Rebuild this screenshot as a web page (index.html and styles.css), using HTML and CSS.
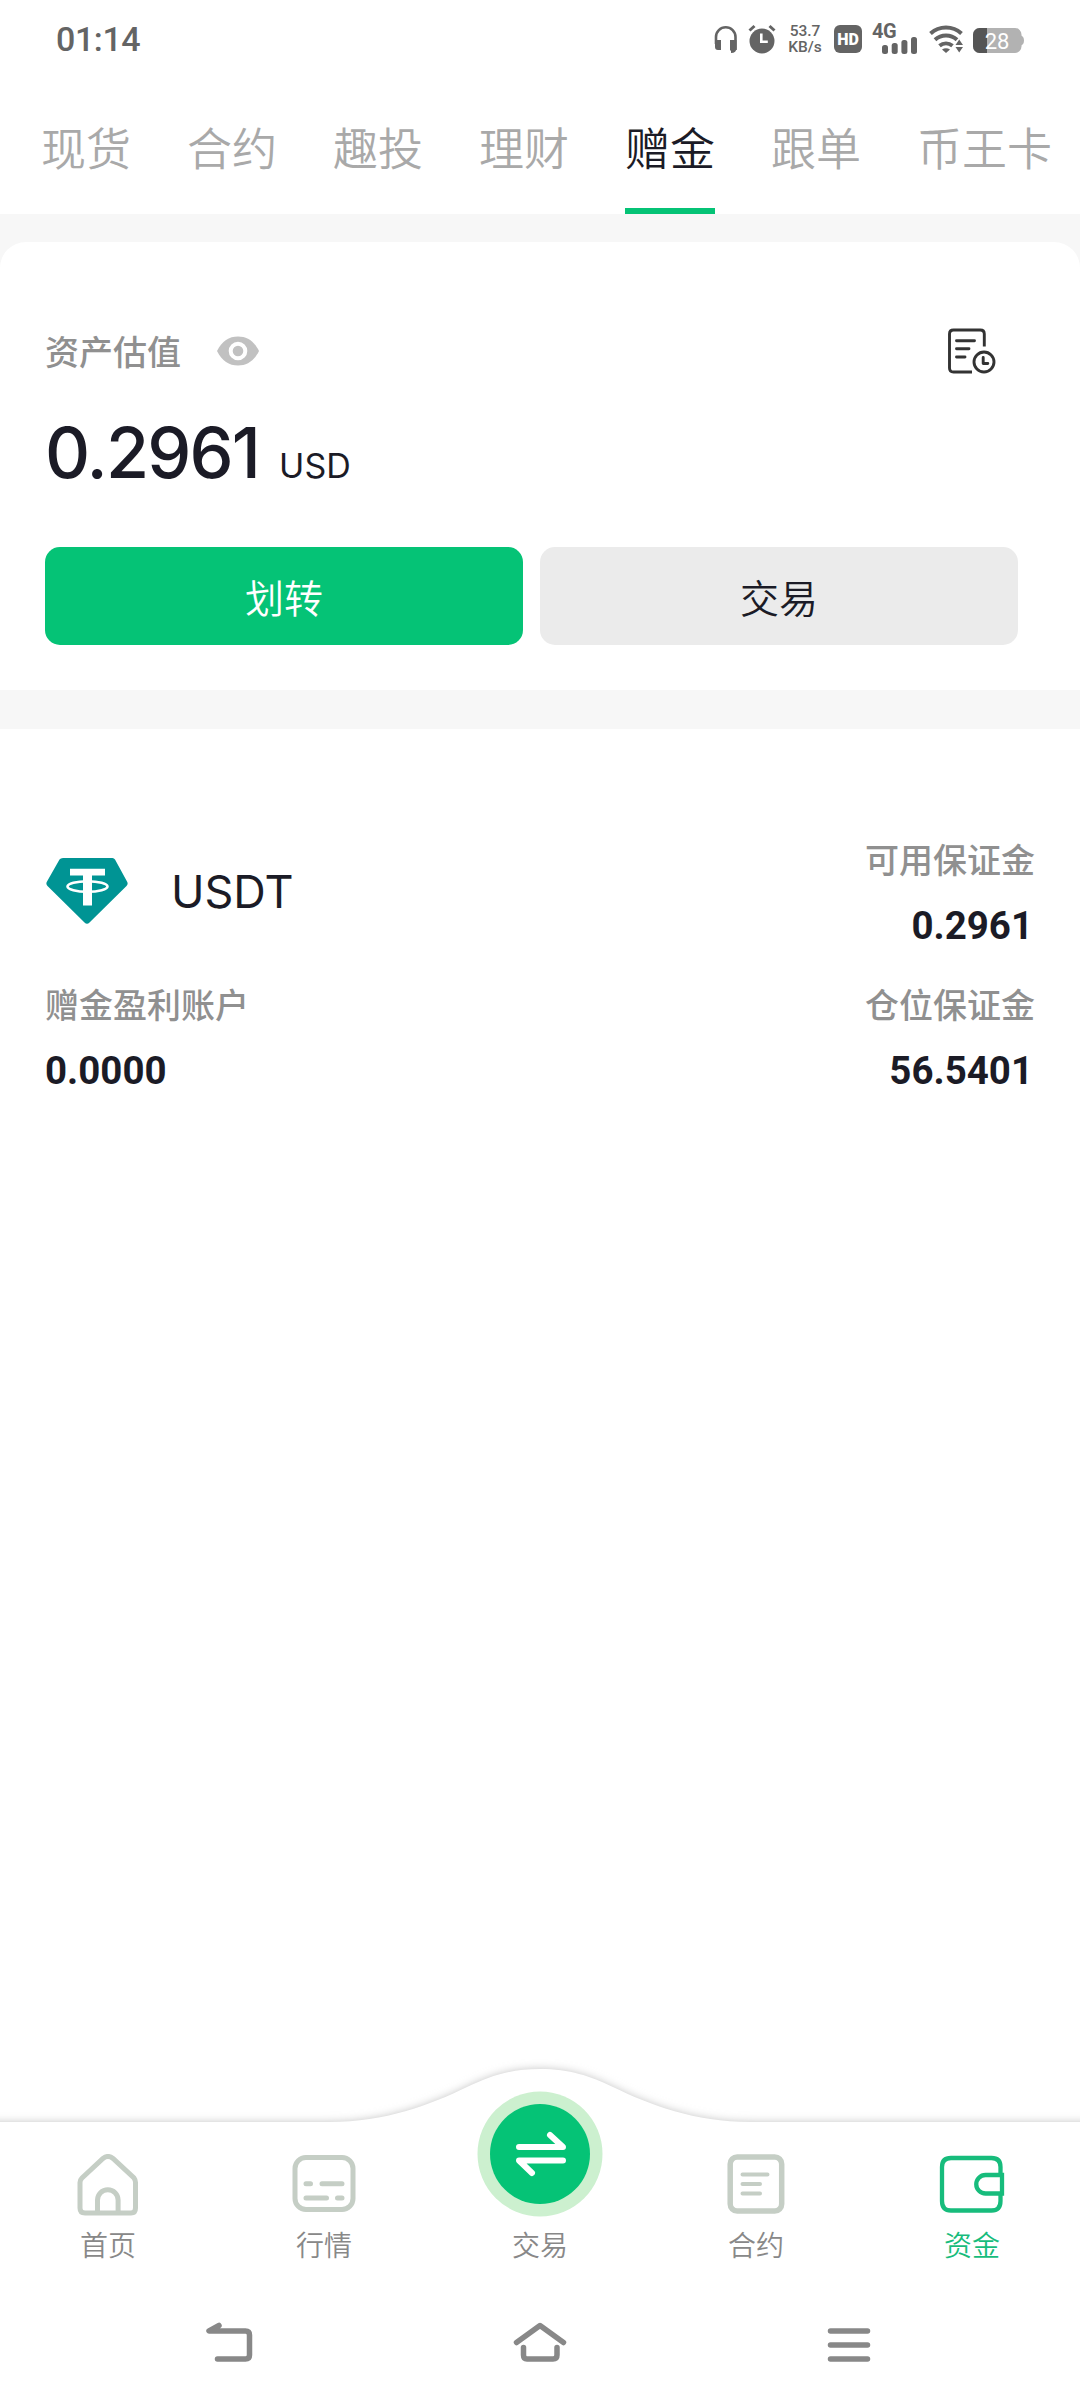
FILE: index.html
```html
<!DOCTYPE html>
<html lang="zh-CN">
<head>
<meta charset="utf-8">
<title>资金</title>
<link rel="stylesheet" href="styles.css">
</head>
<body>
<div class="app">
  <header class="status">
    <span class="time">01:14</span>
    <div class="indicators">
      <svg class="headset" width="24" height="30" viewBox="0 0 24 30"><path d="M2 20v-7a9.700 9.700 0 0 1 19.500 0v13" fill="none" stroke="#646464" stroke-width="2.600"/><path d="M1 16h6v10h-3q-3 0-3-3zM16 16h6.500v8q0 5-5.500 5v-2.500h-1z" fill="#646464"/></svg>
      <svg class="alarm" width="28" height="30" viewBox="0 0 28 30"><circle cx="14" cy="17" r="12.500" fill="#646464"/><path d="M1.500 6.500 6.500 2M26.500 6.500 21.500 2" stroke="#646464" stroke-width="3"/><path d="M13.300 9.500v8.300h6.500" fill="none" stroke="#fff" stroke-width="2.600"/></svg>
      <div class="speed"><span>53.7</span><span>KB/s</span></div>
      <div class="hd">HD</div>
      <div class="signal">
        <span class="gen">4G</span>
        <svg width="36" height="17" viewBox="0 0 36 17" fill="#646464"><rect x="0" y="8" width="6" height="9" rx="2.500"/><rect x="9.700" y="6" width="6" height="11" rx="2.500"/><rect x="19.400" y="3" width="6" height="14" rx="2.500"/><rect x="29" y="0" width="6" height="17" rx="2.500"/></svg>
      </div>
      <svg class="wifi" width="35" height="28" viewBox="0 0 35 28"><g fill="none" stroke="#646464" stroke-width="4"><path d="M1.500 8.500a23 23 0 0 1 31 0"/><path d="M6 14.800a16.500 16.500 0 0 1 22 0"/><path d="M10.500 20.700a10.500 10.500 0 0 1 13 0"/></g><path d="M13 24.500q4-2.500 8 0l-4 3.500z" fill="#646464"/><path d="M26.500 20 30.200 14.500 34 20zM26.500 22 30.200 27.500 34 22z" fill="#646464"/></svg>
      <svg class="battery" width="51" height="26" viewBox="0 0 51 26"><rect width="48.500" height="25" rx="6.500" fill="#b2b2b2"/><path d="M48 7.500q3 1 3 5t-3 5z" fill="#b2b2b2"/><path d="M14 0H6.500A6.500 6.500 0 0 0 0 6.500v12A6.500 6.500 0 0 0 6.500 25H14z" fill="#555"/><text x="24" y="20.700" class="level">28</text></svg>
    </div>
  </header>

  <nav class="tabs">
    <span class="tab">现货</span>
    <span class="tab">合约</span>
    <span class="tab">趣投</span>
    <span class="tab">理财</span>
    <span class="tab active">赠金</span>
    <span class="tab">跟单</span>
    <span class="tab">币王卡</span>
  </nav>

  <main class="content">
    <section class="summary">
      <div class="summary-head">
        <span class="label">资产估值</span>
        <svg class="eye" width="42" height="30" viewBox="0 0 42 30"><path d="M0 15C5 5 12 .5 21 .5S37 5 42 15C37 25 30 29.500 21 29.500S5 25 0 15z" fill="#c1c1c1"/><circle cx="21" cy="15" r="7.300" fill="#c1c1c1" stroke="#fff" stroke-width="4"/></svg>
        <svg class="history" width="48" height="46" viewBox="0 0 48 46" fill="none" stroke="#333" stroke-width="2.900" stroke-linecap="round" stroke-linejoin="round"><path d="M36.300 18.500V6q0-4-4-4H5.500q-4 0-4 4V40q0 4 4 4H24" stroke-linecap="butt"/><path d="M8.500 12.700h18M8.500 20.700h12.500M8.500 29h8.500"/><circle cx="36" cy="34" r="10"/><path d="M35.200 29.500v6h4.600"/></svg>
      </div>
      <div class="balance"><span class="amount">0.2961</span><span class="unit">USD</span></div>
      <div class="actions">
        <button class="btn primary">划转</button>
        <button class="btn">交易</button>
      </div>
    </section>

    <section class="asset">
      <div class="coin">
        <svg width="82" height="68" viewBox="0 0 82 68"><path d="M17 0H66.500Q68 0 69 1.500L81 23.500Q82.500 26 80.500 28L43.500 64.500Q41 67 38.500 64.500L1.500 28Q-.5 26 1 23.500L13.500 1.500Q14.500 0 17 0z" fill="#009494"/><path d="M24 10.700h35v6.700H46V47.500h-9V17.400H24z" fill="#fff"/><ellipse cx="41.500" cy="28.500" rx="20" ry="5.300" fill="none" stroke="#fff" stroke-width="2.600"/></svg>
        <span class="symbol">USDT</span>
      </div>
      <div class="stat end"><span class="label">可用保证金</span><span class="value">0.2961</span></div>
      <div class="stat"><span class="label">赠金盈利账户</span><span class="value">0.0000</span></div>
      <div class="stat end"><span class="label">仓位保证金</span><span class="value">56.5401</span></div>
    </section>
  </main>

  <footer class="bottom">
    <svg class="curve" width="1080" height="80" viewBox="0 0 1080 80"><defs><filter id="shade" x="-2%" y="-40%" width="104%" height="180%"><feGaussianBlur stdDeviation="4.500"/></filter></defs><path d="M-20 72H330C385 72 430 55 467 37C490 26 510 19 540 19S590 26 613 37C650 55 695 72 750 72H1100V100H-20z" fill="#c4c4c4" filter="url(#shade)"/><path d="M0 72H330C385 72 430 55 467 37C490 26 510 19 540 19S590 26 613 37C650 55 695 72 750 72H1080V80H0z" fill="#fff"/></svg>
    <nav class="menu">
      <div class="item">
        <svg width="62" height="62" viewBox="0 0 62 62" fill="none" stroke="#c5cec5" stroke-width="5"><path d="M3 28.500Q3 26 5 24L26 4.500Q31 .5 36 4.500L57 24Q58.500 26 58.500 28.500V54Q58.500 59 54 59H8Q3 59 3 54z"/><path d="M20.500 59V46a10.300 10.300 0 0 1 20.600 0v13"/></svg>
        <span>首页</span>
      </div>
      <div class="item">
        <svg width="64" height="62" viewBox="0 0 64 62" fill="none" stroke="#c5cec5" stroke-width="5" stroke-linecap="round"><rect x="3" y="3.500" width="58" height="52" rx="11"/><path d="M14 29.700h4.500M30 29.700h20M14 44h20.500M45.500 44H50"/></svg>
        <span>行情</span>
      </div>
      <div class="item trade">
        <svg width="126" height="126" viewBox="0 0 126 126"><circle cx="63" cy="63" r="62.500" fill="#ccf0cf"/><circle cx="63" cy="63" r="50" fill="#05c376"/><path d="M42 56H86L73 44M86 69.500H42L55 82" fill="none" stroke="#fff" stroke-width="6" stroke-linecap="round" stroke-linejoin="round"/></svg>
        <span>交易</span>
      </div>
      <div class="item">
        <svg width="58" height="62" viewBox="0 0 58 62" fill="none" stroke="#c5cec5" stroke-linecap="round"><rect x="3.200" y="3" width="51.500" height="54" rx="7" stroke-width="5.500"/><path d="M15.500 20.500h25M15.500 30h17.500M15.500 39.500h17.500" stroke-width="4"/></svg>
        <span>合约</span>
      </div>
      <div class="item current">
        <svg width="66" height="62" viewBox="0 0 66 62" fill="none" stroke="#17bc7c" stroke-width="4.300"><path d="M61.500 22V13Q61.500 4 52.500 4H12Q3 4 3 13V47Q3 56.500 12 56.500H52.500Q61.500 56.500 61.500 47V41"/><path d="M63 21H46.500a9 9 0 0 0 0 18.500H63z"/></svg>
        <span>资金</span>
      </div>
    </nav>
    <div class="system">
      <svg width="54" height="42" viewBox="0 0 54 42" fill="none" stroke="#888" stroke-width="5.500" stroke-linecap="round" stroke-linejoin="round"><path d="M15 3.500 5 9H41.500Q45.500 9 45.500 13V33Q45.500 37 41.500 37H13.500"/></svg>
      <svg width="54" height="42" viewBox="0 0 54 42" fill="none" stroke="#888" stroke-width="5.500" stroke-linecap="round" stroke-linejoin="round"><path d="M3.500 20.500 27 3.500 50.500 20.500M10.500 25.500V33Q10.500 37 14 37H40Q44 37 44 33V25.500"/></svg>
      <svg width="54" height="42" viewBox="0 0 54 42" fill="none" stroke="#888" stroke-width="5.500" stroke-linecap="round"><path d="M8.500 9h37M8.500 23h37M8.500 37h37"/></svg>
    </div>
  </footer>
</div>
</body>
</html>
```

FILE: styles.css
```css
* { box-sizing: border-box; }

body {
  margin: 0;
  background: #fff;
  color: #1b1b26;
  font-family: Roboto, "Noto Sans CJK SC", sans-serif;
}

svg { display: block; flex: none; }

.app {
  display: flex;
  flex-direction: column;
  width: 1080px;
  height: 2408px;
  overflow: hidden;
}

/* status bar */
.status {
  display: flex;
  justify-content: space-between;
  align-items: center;
  height: 78px;
  padding: 0 56px 0 56px;
  color: #646464;
}

.time { font-size: 34px; font-weight: 500; letter-spacing: -0.4px; }

.indicators { display: flex; align-items: center; }
.alarm { margin-left: 10px; }
.speed {
  display: flex;
  flex-direction: column;
  align-items: center;
  width: 34px;
  margin-left: 12px;
  font-size: 15.500px;
  font-weight: 500;
  line-height: 16px;
}
.hd {
  width: 28px;
  height: 28px;
  margin-left: 12px;
  border-radius: 6px;
  background: #646464;
  color: #fff;
  font-size: 16px;
  font-weight: 900;
  line-height: 29px;
  text-align: center;
}
.signal {
  display: flex;
  flex-direction: column;
  width: 45px;
  height: 30px;
  margin-left: 10px;
}
.signal svg { margin: -1px 0 0 10px; }
.gen { font-size: 20px; font-weight: 700; line-height: 14px; height: 14px; letter-spacing: -0.5px; }
.wifi { margin-left: 12px; }
.battery { margin: 3px 0 0 9px; }
.level { fill: #fff; font-size: 22px; text-anchor: middle; }

/* account tabs */
.tabs {
  display: flex;
  gap: 56px;
  height: 136px;
  padding-left: 41px;
  white-space: nowrap;
}
.tab {
  flex: none;
  height: 136px;
  padding-top: 36px;
  font-family: "Noto Sans CJK SC", sans-serif;
  font-size: 45px;
  font-weight: 350;
  line-height: 66px;
  color: #a9a9a9;
}
.tab.active { color: #1b1b26; border-bottom: 6px solid #05c376; }

.content { flex: 1; padding-top: 28px; background: #f7f7f7; display: flex; flex-direction: column; }

.label {
  font-family: "Noto Sans CJK SC", sans-serif;
  font-size: 34px;
  font-weight: 500;
  line-height: 50px;
  color: #909090;
}

/* valuation card */
.summary {
  height: 448px;
  padding: 83px 62px 0 45px;
  border-radius: 26px 26px 0 0;
  background: #fff;
}
.summary-head { display: flex; align-items: center; height: 52px; }
.eye { margin-left: 36px; }
.history { margin: 0 22px 0 auto; }
.balance {
  display: flex;
  align-items: baseline;
  height: 90px;
  margin-top: 31px;
  font-family: Inter, sans-serif;
  line-height: 90px;
}
.amount { font-size: 70px; font-weight: 500; letter-spacing: -1.800px; }
.unit { margin-left: 20px; font-size: 34px; }
.actions { display: flex; gap: 17px; margin-top: 49px; }
.btn {
  flex: 1;
  height: 98px;
  padding: 0;
  border: 0;
  border-radius: 15px;
  background: #ebebeb;
  color: #1b1b26;
  font-family: "Noto Sans CJK SC", sans-serif;
  font-size: 39px;
  font-weight: 350;
  line-height: 98px;
}
.primary { background: #05c376; color: #fff; }

/* asset list */
.asset {
  flex: 1;
  display: grid;
  grid-template-columns: 1fr 1fr;
  grid-auto-rows: 145px;
  margin-top: 39px;
  padding: 105px 45px 0;
  background: #fff;
}
.coin { display: flex; align-items: center; height: 115px; padding-left: 1px; }
.symbol { margin-left: 43px; font-family: Inter, sans-serif; font-size: 45px; }
.stat { display: flex; flex-direction: column; }
.stat.end { align-items: flex-end; }
.value { margin-top: 19px; font-size: 38.500px; font-weight: 700; line-height: 46px; }
.end .value { padding-right: 2px; }

/* bottom bar */
.bottom { height: 358px; background: #fff; position: relative; }
.curve { position: absolute; left: 0; top: 0; overflow: hidden; }
.menu { position: relative; display: flex; height: 220px; }
.item {
  flex: 1;
  display: flex;
  flex-direction: column;
  align-items: center;
  padding-top: 104px;
  font-family: "Noto Sans CJK SC", sans-serif;
  font-size: 28px;
  font-weight: 350;
  line-height: 40px;
  color: #888;
}
.item span { margin-top: 8px; }
.item.trade { padding-top: 41px; }
.trade span { margin-top: 7px; }
.item.current { color: #17bc7c; }
.system { display: flex; justify-content: center; gap: 255px; padding-top: 52px; }
```
